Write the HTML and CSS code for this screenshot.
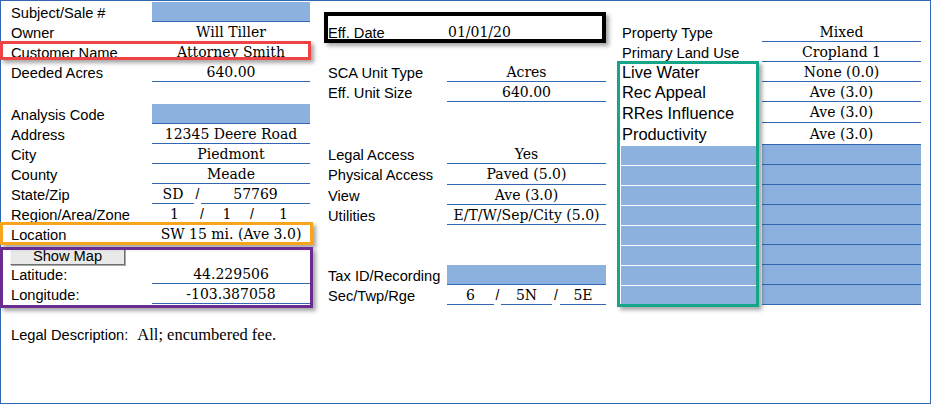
FILE: index.html
```html
<!DOCTYPE html>
<html lang="en">
  <head>
    <meta charset="UTF-8" />
    <meta name="viewport" content="width=device-width, initial-scale=1.0" />
    <title>Subject Property</title>
    <link rel="stylesheet" href="styles.css">
  </head>
  <body>
    <div class="sheet">
      <div class="top">
        <!-- left block -->
        <div class="block block-a">
          <div class="lbl">Subject/Sale #</div>
          <div class="val fill line"></div>

          <div class="lbl">Owner</div>
          <div class="val line">Will Tiller</div>

          <div class="lbl">Customer Name</div>
          <div class="val">Attorney Smith</div>

          <div class="lbl">Deeded Acres</div>
          <div class="val line">640.00</div>

          <div class="gap"></div>

          <div class="lbl">Analysis Code</div>
          <div class="val fill line"></div>

          <div class="lbl">Address</div>
          <div class="val line">12345 Deere Road</div>

          <div class="lbl">City</div>
          <div class="val line">Piedmont</div>

          <div class="lbl">County</div>
          <div class="val line">Meade</div>

          <div class="lbl">State/Zip</div>
          <div class="split">
            <div class="part line w42">SD</div>
            <div class="sep w7">/</div>
            <div class="part line grow">57769</div>
          </div>

          <div class="lbl">Region/Area/Zone</div>
          <div class="split">
            <div class="part line w45">1</div>
            <div class="sep w10">/</div>
            <div class="part line w40">1</div>
            <div class="sep w10">/</div>
            <div class="part line grow">1</div>
          </div>

          <div class="lbl">Location</div>
          <div class="val">SW 15 mi. (Ave 3.0)</div>

          <div class="btn-row">
            <button class="map-btn" type="button">Show Map</button>
          </div>

          <div class="lbl">Latitude:</div>
          <div class="val line">44.229506</div>

          <div class="lbl">Longitude:</div>
          <div class="val line">-103.387058</div>
        </div>

        <!-- middle block -->
        <div class="block block-b">
          <div class="gap"></div>

          <div class="lbl">Eff. Date</div>
          <div class="val line left">01/01/20</div>

          <div class="gap"></div>

          <div class="lbl">SCA Unit Type</div>
          <div class="val line">Acres</div>

          <div class="lbl">Eff. Unit Size</div>
          <div class="val line">640.00</div>

          <div class="gap"></div>

          <div class="lbl">Legal Access</div>
          <div class="val line">Yes</div>

          <div class="lbl">Physical Access</div>
          <div class="val line">Paved (5.0)</div>

          <div class="lbl">View</div>
          <div class="val line">Ave (3.0)</div>

          <div class="lbl">Utilities</div>
          <div class="val line">E/T/W/Sep/City (5.0)</div>

          <div class="gap"></div>

          <div class="lbl">Tax ID/Recording</div>
          <div class="val fill line"></div>

          <div class="lbl">Sec/Twp/Rge</div>
          <div class="split">
            <div class="part line w47">6</div>
            <div class="sep w7">/</div>
            <div class="part line w51">5N</div>
            <div class="sep w8">/</div>
            <div class="part line grow">5E</div>
          </div>
        </div>

        <!-- right block -->
        <div class="block block-c">
          <div class="gap"></div>

          <div class="lbl">Property Type</div>
          <div class="val line">Mixed</div>

          <div class="lbl">Primary Land Use</div>
          <div class="val line">Cropland 1</div>

          <div class="lbl big">Live Water</div>
          <div class="val line">None (0.0)</div>

          <div class="lbl big">Rec Appeal</div>
          <div class="val line">Ave (3.0)</div>

          <div class="lbl big">RRes Influence</div>
          <div class="val line">Ave (3.0)</div>

          <div class="lbl big">Productivity</div>
          <div class="val line">Ave (3.0)</div>

          <div class="lbl cell-fill"></div><div class="val fill line"></div>
          <div class="lbl cell-fill"></div><div class="val fill line"></div>
          <div class="lbl cell-fill"></div><div class="val fill line"></div>
          <div class="lbl cell-fill"></div><div class="val fill line"></div>
          <div class="lbl cell-fill"></div><div class="val fill line"></div>
          <div class="lbl cell-fill"></div><div class="val fill line"></div>
          <div class="lbl cell-fill"></div><div class="val fill line"></div>
          <div class="lbl cell-fill"></div><div class="val fill line"></div>
        </div>
      </div>

      <div class="legal">
        <span class="legal-lbl">Legal Description:</span>
        <span class="legal-val">All; encumbered fee.</span>
      </div>

      <!-- highlight frames -->
      <div class="mark mark-red"></div>
      <div class="mark mark-orange"></div>
      <div class="mark mark-purple"></div>
      <div class="mark mark-black"></div>
      <div class="mark mark-green"></div>
    </div>
  </body>
</html>
```

FILE: styles.css
```css
body {
  margin: 0;
  background-color: #ffffff;
  font-family: "Liberation Sans", Arial, sans-serif;
  color: #000;
}

.sheet {
  position: relative;
  box-sizing: border-box;
  width: 931px;
  height: 404px;
  border: 1px solid #3268b2;
  background: #fff;
}

.top {
  display: flex;
  padding-top: 1px;
}

.block {
  display: grid;
}

.block-a {
  width: 309px;
  grid-template-columns: 151px 158px;
  grid-template-rows: 20px 20px 20px 20px 22px repeat(10, 20px);
}

.block-b {
  width: 282px;
  margin-left: 14px;
  grid-template-columns: 123px 159px;
  grid-template-rows: 20px 20px 20px 20px 20px 42px 20px 21px 20px 20px 40px 20px 20px;
}

.block-c {
  width: 300px;
  margin-left: 15px;
  grid-template-columns: 135px 159px;
  column-gap: 6px;
  grid-template-rows: 20px 20px 20px 20px 20px 21px 22px repeat(8, 20px);
}

.gap {
  grid-column: 1 / 3;
}

.lbl {
  display: flex;
  align-items: center;
  font-size: 14.67px;
  white-space: nowrap;
  padding-top: 1px;
}

.block-a .lbl {
  padding-left: 10px;
}

.block-b .lbl {
  padding-left: 4px;
}

.block-c .lbl {
  padding-left: 1px;
}

.lbl.big {
  font-size: 16.4px;
}

.val,
.part {
  box-sizing: border-box;
  display: flex;
  align-items: center;
  justify-content: center;
  font-family: "DejaVu Serif", "Liberation Serif", serif;
  font-size: 14px;
  white-space: nowrap;
}

.val.left {
  justify-content: flex-start;
  padding-left: 1px;
}

.line {
  border-bottom: 1px solid #3268b2;
}

.fill {
  background-color: #8db1de;
}

.cell-fill {
  box-sizing: border-box;
  background-color: #8db1de;
  border-top: 1px solid #fff;
}

.split {
  display: flex;
}

.sep {
  display: flex;
  align-items: center;
  justify-content: center;
  font-size: 14px;
}

.grow { flex: 1; }
.w7 { width: 7px; }
.w8 { width: 8px; }
.w10 { width: 10px; }
.w40 { width: 40px; }
.w42 { width: 42px; }
.w45 { width: 45px; }
.w47 { width: 47px; }
.w51 { width: 51px; }

.btn-row {
  grid-column: 1 / 3;
  padding: 3px 0 0 9px;
}

.map-btn {
  box-sizing: border-box;
  width: 115px;
  height: 18px;
  padding: 0;
  font-family: "Liberation Sans", Arial, sans-serif;
  font-size: 14.67px;
  line-height: 14px;
  color: #000;
  background: #e9e9e9;
  border: 1px solid;
  border-color: #f4f4f4 #707070 #707070 #f4f4f4;
  box-shadow: 1px 1px 0 #a9a9a9;
}

.legal {
  display: flex;
  align-items: center;
  height: 20px;
  margin-top: 20px;
  padding-left: 10px;
}

.legal-lbl {
  font-size: 14.67px;
}

.legal-val {
  margin-left: 9px;
  font-family: "Liberation Serif", "Times New Roman", serif;
  font-size: 16.5px;
}

.mark {
  position: absolute;
  box-sizing: border-box;
  border: 3px solid;
  box-shadow: 3px 3px 4px rgba(0, 0, 0, 0.35);
  pointer-events: none;
}

.mark-red {
  left: -1px;
  top: 40px;
  width: 311px;
  height: 19px;
  border-color: #f04444;
}

.mark-orange {
  left: -1px;
  top: 221px;
  width: 313px;
  height: 23px;
  border-color: #f7a51c;
}

.mark-purple {
  left: -1px;
  top: 246px;
  width: 313px;
  height: 61px;
  border-color: #6b2c92;
}

.mark-black {
  left: 323px;
  top: 11px;
  width: 282px;
  height: 31px;
  border-width: 4px;
  border-color: #000;
}

.mark-green {
  left: 616px;
  top: 60px;
  width: 142px;
  height: 246px;
  border-color: #13a689;
}
```
